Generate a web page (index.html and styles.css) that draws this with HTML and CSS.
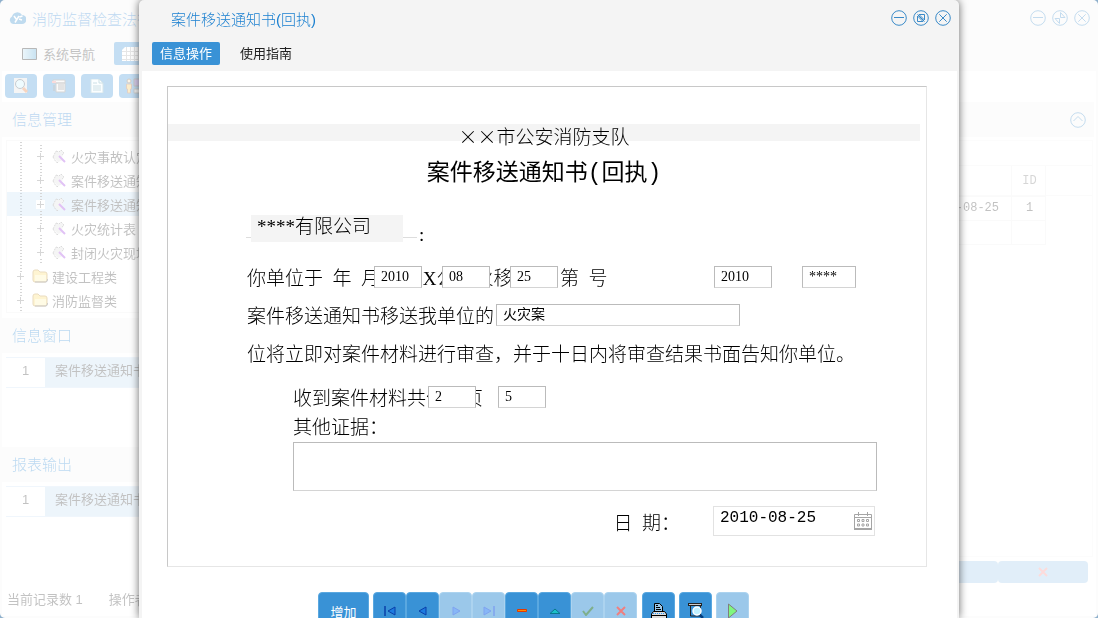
FILE: index.html
```html
<!DOCTYPE html>
<html lang="zh-CN">
<head>
    <meta charset="UTF-8">
    <title>案件移送通知书(回执)</title>
    <link rel="stylesheet" href="styles.css">
</head>
<body>
    <!-- shared icons -->
    <svg class="sprite" width="0" height="0">
        <symbol id="i-min" viewBox="0 0 16 16"><circle cx="8" cy="8" r="7.3"/><path d="M3 7.5h10"/></symbol>
        <symbol id="i-close" viewBox="0 0 16 16"><circle cx="8" cy="8" r="7.3"/><path d="M4.3 4.3l7.4 7.4M11.7 4.3l-7.4 7.4"/></symbol>
        <symbol id="i-restore" viewBox="0 0 16 16"><circle cx="8" cy="8" r="7.3"/><path d="M6 4.500h5.500v5.500zM4.500 6v5.500h5.500zM4.500 4.500l7 7"/></symbol>
        <symbol id="i-max" viewBox="0 0 16 16"><circle cx="8" cy="8" r="7.3"/><path d="M8.500 7.500v-5l4.500 5zM7.500 8.500v5l-4.500-5z"/></symbol>
        <symbol id="i-up" viewBox="0 0 16 16"><circle cx="8" cy="8" r="7.3"/><path d="M3.500 9l4.500-4.500 4.500 4.500"/></symbol>
        <symbol id="i-form" viewBox="0 0 15 15"><path d="M1 8l3-6 3 1 2-2 3 3-2 4 1 3-5 2-2-2z" fill="#ddd"/><path d="M1 8l3-6M4 2l3 1 2-2 3 3-2 2M1 8l3 5 3 1" fill="none" stroke="#888" stroke-dasharray="2 1"/><path d="M7 7l6 6" stroke="#93d" stroke-width="2"/></symbol>
        <symbol id="i-folder" viewBox="0 0 16 14"><path d="M1 3q0-2 2-2h3l2 2h5q2 0 2 2v6q0 2-2 2H3q-2 0-2-2z" fill="#fbd967" stroke="#b98a2a"/><path d="M3 6h11v6H3z" fill="#fff0a8"/><path d="M3 13h11q1.500 0 1.500-3" fill="none" stroke="#555"/></symbol>
    </svg>

    <div class="stage">
        <div class="backdrop">
            <div class="main-window">
                <header class="main-head">
                    <div class="main-title">
                        <svg width="17" height="14" viewBox="0 0 17 14"><path d="M4 13a4 4 0 0 1-1-7.500A5.500 5.500 0 0 1 13 4a4.500 4.500 0 0 1 0 9z" fill="#2a86c8"/><path d="M5 5l2.500 3.500M10 5l-4 6.500M10.500 6l3-1M10 8l3 1" stroke="#fff" stroke-width="1.500"/></svg>
                        <h1>消防监督检查法律文书</h1>
                        <div class="win-btns">
                            <button aria-label="最小化"><svg><use href="#i-min"/></svg></button>
                            <button aria-label="最大化"><svg><use href="#i-max"/></svg></button>
                            <button aria-label="关闭"><svg><use href="#i-close"/></svg></button>
                        </div>
                    </div>
                    <nav class="main-nav">
                        <a href="#" class="nav-item">
                            <svg width="15" height="12" viewBox="0 0 15 12"><defs><linearGradient id="scr"><stop offset="0" stop-color="#bfe0f0"/><stop offset="1" stop-color="#4aa0d0"/></linearGradient></defs><path d="M.5 .5h14v11H.5z" fill="url(#scr)" stroke="#111" stroke-width="1"/></svg>
                            系统导航
                        </a>
                        <a href="#" class="nav-item active" aria-label="信息管理">
                            <svg width="20" height="14" viewBox="0 0 20 14"><path d="M3 0h17v14H0V3z" fill="#fff"/><path d="M0 4.500h20M0 8.500h20M0 12.500h20M4.500 0v14M8.500 0v14M12.500 0v14M16.500 0v14" stroke="#aaa"/></svg>
                        </a>
                    </nav>
                </header>

                <div class="main-body">
                    <aside class="sidebar">
                        <div class="tools">
                            <button aria-label="查询"><svg width="16" height="16" viewBox="0 0 16 16"><path d="M1 0h13v15H1z" fill="#ddd"/><circle cx="7" cy="6" r="4.500" fill="#c9f1fa" stroke="#456"/><path d="M10 10l4 4" stroke="#e0702c" stroke-width="3"/></svg></button>
                            <button aria-label="列表"><svg width="14" height="14" viewBox="0 0 14 14"><path d="M1 1h12v3H1zM4 4h9v9H4z" fill="#eee" stroke="#777"/><path d="M6 6h6M6 8h6M6 10h6M2 6v6" stroke="#555"/><path d="M0 2h4v2H0z" fill="#e88"/></svg></button>
                            <button aria-label="文档"><svg width="14" height="14" viewBox="0 0 14 14"><path d="M1 0h8l4 4v10H1z" fill="#f2fbff" stroke="#7ab"/><path d="M3 4h4M3 7h8M3 9h8M3 11h8M9 0v4h4" stroke="#59a" fill="none"/></svg></button>
                            <button aria-label="人员"><svg width="20" height="16" viewBox="0 0 20 16"><path d="M9 1h10v7H9z" fill="#86c" stroke="#555"/><circle cx="4" cy="3" r="2" fill="#eed6b0" stroke="#654"/><path d="M1.500 6h5v5h-1v4h-3v-4h-1z" fill="#f4c04a" stroke="#964"/><path d="M9 11h9v4H9z" fill="#ddd" stroke="#666"/></svg></button>
                        </div>

                        <h2 class="panel-head">信息管理</h2>
                        <ul class="tree">
                            <li class="leaf"><i class="plus"></i><svg width="15" height="15"><use href="#i-form"/></svg>火灾事故认定书</li>
                            <li class="leaf"><i class="plus"></i><svg width="15" height="15"><use href="#i-form"/></svg>案件移送通知书</li>
                            <li class="leaf selected"><i class="plus"></i><svg width="15" height="15"><use href="#i-form"/></svg>案件移送通知书(回执)</li>
                            <li class="leaf"><i class="plus"></i><svg width="15" height="15"><use href="#i-form"/></svg>火灾统计表</li>
                            <li class="leaf"><i class="plus"></i><svg width="15" height="15"><use href="#i-form"/></svg>封闭火灾现场公告</li>
                            <li><i class="plus"></i><svg width="16" height="14"><use href="#i-folder"/></svg>建设工程类</li>
                            <li><i class="plus"></i><svg width="16" height="14"><use href="#i-folder"/></svg>消防监督类</li>
                        </ul>

                        <h2 class="panel-head">信息窗口</h2>
                        <ol class="list">
                            <li><span class="num">1</span><span class="name">案件移送通知书</span></li>
                        </ol>

                        <h2 class="panel-head">报表输出</h2>
                        <ol class="list">
                            <li><span class="num">1</span><span class="name">案件移送通知书</span></li>
                        </ol>

                        <div class="status"><span>当前记录数 1</span><span>操作者</span></div>
                    </aside>

                    <section class="content">
                        <div class="content-head">
                            <button aria-label="收起"><svg><use href="#i-up"/></svg></button>
                        </div>
                        <div class="grid-box">
                            <div class="grid-head-line">
                                <table>
                                    <tr><th></th><th class="id">ID</th></tr>
                                    <tr><td>2010-08-25</td><td class="id">1</td></tr>
                                    <tr><td></td><td></td></tr>
                                </table>
                            </div>
                        </div>
                        <div class="content-btns">
                            <button aria-label="确定"></button>
                            <button aria-label="取消"><svg width="10" height="10" viewBox="0 0 10 10"><path d="M1 1l8 8M9 1l-8 8" stroke="#f01010" stroke-width="2"/></svg></button>
                        </div>
                    </section>
                </div>
            </div>
        </div>

        <div class="overlay">
            <div class="dialog">
                <header class="dialog-head">
                    <div class="dialog-title">
                        <h2>案件移送通知书(回执)</h2>
                        <div class="win-btns">
                            <button aria-label="最小化"><svg><use href="#i-min"/></svg></button>
                            <button aria-label="还原"><svg><use href="#i-restore"/></svg></button>
                            <button aria-label="关闭"><svg><use href="#i-close"/></svg></button>
                        </div>
                    </div>
                    <nav class="tabs">
                        <a href="#" class="active">信息操作</a>
                        <a href="#">使用指南</a>
                    </nav>
                </header>

                <div class="dialog-body">
                    <form class="sheet">
                        <div class="org">××市公安消防支队</div>
                        <h3 class="doc-title">案件移送通知书(回执)</h3>

                        <div class="company">
                            <span class="underline"><input type="text" value="****有限公司" aria-label="单位名称"></span>
                            <b>:</b>
                        </div>

                        <div class="line">
                            <span>你单位于  年  月 日以X公消火移字      第  号</span>
                            <input class="field year" type="text" value="2010" aria-label="年">
                            <input class="field month" type="text" value="08" aria-label="月">
                            <input class="field day" type="text" value="25" aria-label="日">
                            <input class="field doc-year" type="text" value="2010" aria-label="文书年份">
                            <input class="field doc-no" type="text" value="****" aria-label="文书编号">
                        </div>
                        <div class="line">
                            <span>案件移送通知书移送我单位的  案件收悉，我单</span>
                            <input class="field case" type="text" value="火灾案" aria-label="案件名称">
                        </div>
                        <div class="line"><span>位将立即对案件材料进行审查，并于十日内将审查结果书面告知你单位。</span></div>

                        <div class="line indent count">
                            <span>收到案件材料共份，页</span>
                            <input class="field copies" type="text" value="2" aria-label="份数">
                            <input class="field pages" type="text" value="5" aria-label="页数">
                        </div>
                        <label class="line indent evidence-label" for="evidence">其他证据：</label>
                        <textarea id="evidence" class="evidence"></textarea>

                        <div class="date-row">
                            <label for="date">日  期：</label>
                            <div class="date-field">
                                <input type="text" id="date" value="2010-08-25">
                                <svg width="18" height="18" viewBox="0 0 18 18" fill="none" stroke="#a5a5a5"><path d="M.5 2.500h17v14.500H.5zM.5 5.500h17M4.500 0v4M13.500 0v4"/><path d="M0 17h18" stroke-width="2"/><path d="M3.500 7.500h2v2h-2zM8 7.500h2v2H8zM12.500 7.500h2v2h-2zM3.500 12h2v2h-2zM8 12h2v2H8zM12.500 12h2v2h-2z"/></svg>
                            </div>
                        </div>
                    </form>

                    <div class="actions">
                        <button class="add">增加</button>
                        <div class="group">
                            <button aria-label="第一条"><svg width="12" height="10" viewBox="0 0 12 10"><path d="M1 0v10" stroke="#0a3fa8" stroke-width="1.500"/><path d="M11 1v8L4 5z" fill="#1d7be0" stroke="#0a3fa8"/></svg></button>
                            <button aria-label="上一条"><svg width="12" height="10" viewBox="0 0 12 10"><path d="M9 1v8L2 5z" fill="#1d7be0" stroke="#0a3fa8"/></svg></button>
                            <button disabled aria-label="下一条"><svg width="12" height="10" viewBox="0 0 12 10"><path d="M3 1v8l7-4z" fill="#1070f0" stroke="#0048e0"/></svg></button>
                            <button disabled aria-label="最后一条"><svg width="12" height="10" viewBox="0 0 12 10"><path d="M11 0v10" stroke="#0048e0" stroke-width="1.500"/><path d="M1 1v8l7-4z" fill="#1070f0" stroke="#0048e0"/></svg></button>
                            <button aria-label="删除"><svg width="12" height="10" viewBox="0 0 12 10"><path d="M1.500 3.500h9v2h-9z" fill="#ff8a00" stroke="#e03a00"/></svg></button>
                            <button aria-label="编辑"><svg width="12" height="10" viewBox="0 0 12 10"><path d="M1 7.500h10L6 3z" fill="#1cc0c8" stroke="#087a90"/></svg></button>
                            <button disabled aria-label="保存"><svg width="12" height="10" viewBox="0 0 12 10"><path d="M1 5l3 4 7-8" fill="none" stroke="#006018" stroke-width="2"/></svg></button>
                            <button disabled aria-label="取消"><svg width="12" height="10" viewBox="0 0 12 10"><path d="M2 1l8 8M10 1l-8 8" stroke="#e00000" stroke-width="2"/></svg></button>
                        </div>
                        <button aria-label="打印"><svg width="16" height="16" viewBox="0 0 16 16"><path d="M3.500 8.500v-8h5l3 3v5" fill="#9cc8ea" stroke="#000"/><path d="M5 2.500h2M5 4.500h4M5 6.500h5" stroke="#000"/><path d="M.5 11l2-2.500h11l2 2.500v4.500H.5z" fill="#ddd" stroke="#000"/><path d="M2 10.500h12" stroke="#29f" stroke-dasharray="1 1"/><path d="M1 12.500h14" stroke="#000"/></svg></button>
                        <button aria-label="打印预览"><svg width="16" height="16" viewBox="0 0 16 16"><path d="M2.500 3v10h10V3" fill="#3992d6" stroke="#222"/><path d="M0 1.500h14" stroke="#222" stroke-width="3"/><path d="M1 1.500h12" stroke="#ccc"/><circle cx="9" cy="8" r="4" fill="#bff0ff" stroke="#fff" stroke-width="1.500"/><path d="M12 12l3 3" stroke="#023e80" stroke-width="2.500"/></svg></button>
                        <button disabled class="run" aria-label="执行"><svg width="12" height="16" viewBox="0 0 12 16"><path d="M1.500 1v14l8.500-7z" fill="#00f000" stroke="#000"/></svg></button>
                    </div>
                </div>
            </div>
        </div>
    </div>
</body>
</html>
```

FILE: styles.css
```css
* {
    margin: 0;
    padding: 0;
    box-sizing: border-box;
}

body {
    background: white;
    font-family: "Liberation Sans", "Noto Sans CJK SC", sans-serif;
    font-size: 13px;
    color: #333;
}

button, input, textarea {
    font: inherit;
    color: inherit;
    border: none;
    background: none;
}

a {
    color: inherit;
    text-decoration: none;
}

ul, ol {
    list-style: none;
}

.sprite {
    position: absolute;
}

.stage {
    position: relative;
    height: calc(100vh - 17px);
    overflow: hidden;
    background: #8fb0cc;
}

.backdrop {
    height: 100%;
    background: white;
    border-radius: 5px;
    overflow: hidden;
}

/* main window, faded while the dialog is open */
.main-window {
    height: 100%;
    display: flex;
    flex-direction: column;
    border: 1px solid #f4f4f4;
    border-width: 0 2px 2px 2px;
    opacity: 0.3;
    white-space: nowrap;
}

.main-head {
    flex-shrink: 0;
    height: 71px;
    background: #f4f4f4;
}

.main-title {
    display: flex;
    align-items: center;
    height: 36px;
    padding: 0 6px 0 7px;
    gap: 6px;
}

.main-title h1, .panel-head, .dialog-title h2 {
    font-size: 15px;
    font-weight: 300;
    color: #1c80d0;
}

.win-btns {
    display: flex;
    gap: 6px;
    margin-left: auto;
}

.win-btns button, .content-head button {
    width: 16px;
    height: 16px;
}

.win-btns svg, .content-head svg {
    display: block;
    width: 16px;
    height: 16px;
    fill: none;
    stroke: #3a8ac8;
    stroke-width: 1;
}

.main-nav {
    display: flex;
    padding: 6px 0 0 12px;
    gap: 11px;
}

.nav-item {
    display: flex;
    align-items: center;
    gap: 6px;
    height: 23px;
    padding: 0 8px;
}

.nav-item.active {
    background: #3992d6;
    border-radius: 2px;
}

.main-body {
    flex: 1;
    display: grid;
    grid-template-columns: 280px 1fr;
    min-height: 0;
}

.sidebar {
    display: flex;
    flex-direction: column;
}

.tools {
    display: flex;
    gap: 6px;
    padding: 3px 3px 4px;
}

.tools button {
    display: flex;
    align-items: center;
    justify-content: center;
    width: 32px;
    height: 24px;
    background: #3992d6;
    border-radius: 4px;
}

.panel-head {
    height: 35px;
    line-height: 36px;
    padding-left: 10px;
    background: #f4f4f4;
}

.tree {
    margin: 3px 0 5px 4px;
    padding-top: 3px;
    border: 1px solid #eee;
    background: radial-gradient(circle, #777 1px, transparent 1px) 13px 0 / 2px 3px repeat-y;
}

.tree li {
    display: flex;
    align-items: center;
    gap: 4px;
    height: 24px;
    padding-left: 9px;
}

.tree .leaf {
    padding-left: 29px;
    background: radial-gradient(circle, #777 1px, transparent 1px) 33px 0 / 2px 3px repeat-y;
}

.tree .selected {
    background-color: rgba(57, 146, 214, 0.28);
}

.plus {
    width: 9px;
    height: 9px;
    margin-right: 3px;
    background:
        linear-gradient(#777, #777) center / 7px 1px no-repeat,
        linear-gradient(#777, #777) center / 1px 7px no-repeat,
        white;
}

.list {
    height: 90px;
    margin: 4px 0 0 4px;
}

.list li {
    display: flex;
    height: 31px;
    line-height: 25px;
    border: 1px solid #cbe2f4;
    border-width: 1px 0;
}

.list .num {
    width: 39px;
    text-align: center;
}

.list .name {
    flex: 1;
    padding-left: 10px;
    background: #c3dcf0;
}

.status {
    display: flex;
    gap: 26px;
    margin-top: auto;
    padding: 0 0 7px 5px;
    line-height: 18px;
}

.content {
    display: flex;
    flex-direction: column;
    padding: 31px 2px 33px 0;
}

.content-head {
    display: flex;
    align-items: center;
    justify-content: flex-end;
    height: 35px;
    padding-right: 8px;
    background: #f4f4f4;
}

.grid-box {
    flex: 1;
    margin: 3px 1px 4px 0;
    padding-top: 24px;
    border: 1px solid #f4f4f4;
}

.grid-head-line {
    border-top: 1px solid #f0f0f0;
    background: linear-gradient(#f0f0f0, #f0f0f0) 0 29px / 100% 1px no-repeat;
}

.content table {
    border-collapse: collapse;
    width: calc(100% - 46px);
    font: 12px "Liberation Mono", "Noto Sans CJK SC", monospace;
}

.content th, .content td {
    height: 24px;
    border: 1px solid #eee;
    text-align: right;
    padding-right: 12px;
}

.content th {
    height: 30px;
    font-weight: normal;
    border-top: none;
    color: #777;
}

.content .id {
    width: 34px;
    text-align: center;
    padding: 0 6px 0 8px;
}

.content-btns {
    display: flex;
    justify-content: flex-end;
    padding-right: 6px;
}

.content-btns button {
    display: flex;
    align-items: center;
    justify-content: center;
    width: 90px;
    height: 22px;
    background: #3992d6;
    border-radius: 4px;
    opacity: 0.5;
}

/* dialog */
.overlay {
    position: absolute;
    inset: 0;
    display: flex;
    justify-content: center;
}

.dialog {
    width: 100%;
    max-width: 820px;
    display: flex;
    flex-direction: column;
    background: #f4f4f4;
    border-radius: 5px 5px 0 0;
    box-shadow: 0 0 8px rgba(0, 0, 0, 0.6);
    overflow: hidden;
}

.dialog-head {
    flex-shrink: 0;
    height: 71px;
}

.dialog-title {
    display: flex;
    align-items: center;
    height: 36px;
    padding: 0 8px 0 32px;
}

.tabs {
    display: flex;
    gap: 12px;
    padding: 6px 0 0 13px;
}

.tabs a {
    padding: 0 8px;
    line-height: 23px;
    border-radius: 2px;
    color: #222;
}

.tabs a.active {
    background: #3992d6;
    color: white;
}

.dialog-body {
    flex: 1;
    margin: 0 2px 0 3px;
    padding: 15px 30px 0 25px;
    background: white;
}

.sheet {
    padding: 37px 0 30px;
    border: 1px solid #c8c8c8;
    border-right-color: #e6e6e6;
    border-bottom-color: #e6e6e6;
    font-family: "Liberation Serif", "Noto Sans CJK SC", serif;
    font-size: 19px;
    font-weight: 300;
    color: black;
}

.org {
    height: 17px;
    line-height: 24px;
    margin-right: 6px;
    background: #f4f4f4;
    font-family: "Noto Sans CJK SC", sans-serif;
    text-align: center;
}

.doc-title {
    margin: 15px 6px 0 0;
    font-family: "Liberation Mono", "Noto Sans CJK SC", monospace;
    font-size: 23px;
    font-weight: 400;
    line-height: 36px;
    text-align: center;
}

.company {
    display: flex;
    align-items: flex-start;
    height: 27px;
    margin: 23px 0 0 78px;
}

.underline {
    width: 171px;
    height: 23px;
    padding-left: 5px;
    border-bottom: 1px solid #ddd;
}

.underline input {
    display: block;
    width: 152px;
    height: 27px;
    padding: 0 6px 8px;
    background: #f4f4f4;
}

.company b {
    padding-left: 2px;
    line-height: 40px;
}

.line {
    position: relative;
    display: block;
    height: 38px;
    margin-left: 79px;
    line-height: 38px;
}

.line span {
    white-space: pre;
}

.company + .line {
    margin-top: 18px;
}

.line.indent {
    margin-left: 125px;
}

.count {
    height: 30px;
    margin-top: 10px;
    line-height: 30px;
}

.evidence-label {
    height: 28px;
    line-height: 28px;
}

/* fields lie over the printed text of the document */
.field {
    position: absolute;
    top: 6px;
    width: 48px;
    height: 22px;
    padding: 0 6px;
    background: white;
    border: 1px solid #bbb;
    border-bottom-color: #d4d4d4;
    font-size: 14px;
    font-weight: 400;
}

.year { left: 127px; }
.month { left: 195px; }
.day { left: 263px; }
.doc-year { left: 467px; width: 58px; }
.doc-no { left: 555px; width: 54px; }
.case { left: 249px; width: 244px; }
.copies { top: 2px; left: 135px; }
.pages { top: 2px; left: 205px; }

.evidence {
    display: block;
    width: calc(100% - 174px);
    height: 49px;
    margin-left: 125px;
    border: 1px solid #bbb;
    border-bottom-color: #d4d4d4;
    resize: none;
}

.date-row {
    display: flex;
    justify-content: flex-end;
    align-items: center;
    gap: 33px;
    margin: 15px 51px 0 0;
    white-space: pre;
}

.date-field {
    display: flex;
    align-items: center;
    width: 162px;
    height: 30px;
    padding: 0 2px 0 6px;
    border: 1px solid #e2e2e2;
}

.date-field input {
    flex: 1;
    min-width: 0;
    padding-bottom: 6px;
    font: 16px "Liberation Mono", monospace;
}

.actions {
    display: flex;
    gap: 4px;
    margin-top: 25px;
    padding-left: 151px;
}

.actions .group {
    display: flex;
    margin-right: 1px;
}

.actions button {
    width: 33px;
    height: 38px;
    background: #3992d6;
    border: 1px solid #5aa8e0;
    border-radius: 4px;
}

.actions button svg {
    display: block;
    margin: 0 auto;
}

.actions button:disabled {
    opacity: 0.5;
}

.actions .add {
    width: 51px;
    color: white;
}
```
